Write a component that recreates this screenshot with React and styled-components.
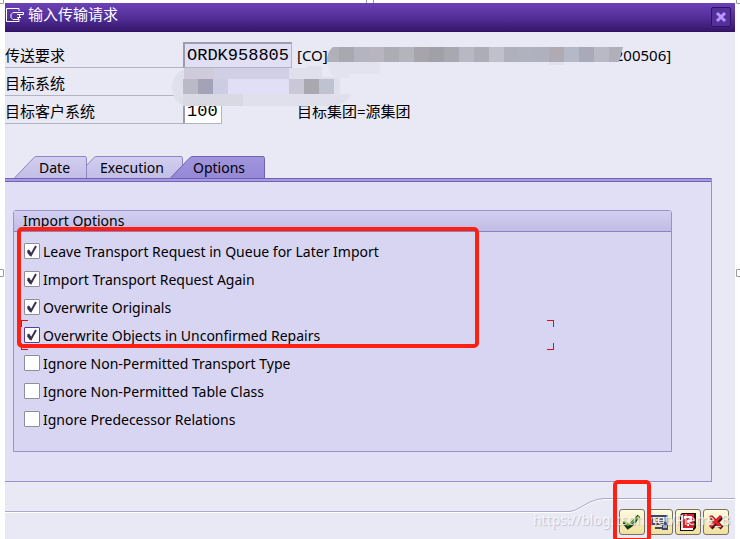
import React, { useState } from 'react';
import styled, { createGlobalStyle } from 'styled-components';

const GlobalStyle = createGlobalStyle`
  * {
    box-sizing: border-box;
  }

  body {
    margin: 0;
    background: #fff;
    color: #000;
    font-family: 'Noto Sans', 'Noto Sans CJK SC', sans-serif;
    font-size: 14px;
  }

  button, input {
    font: inherit;
    margin: 0;
  }
`;

const Page = styled.div`
  position: relative;
  display: flex;
  min-height: 100vh;
  padding: 3px 5px 0;
  overflow: hidden;
`;

const Handle = styled.span`
  position: absolute;
  width: 8px;
  height: 8px;
  border: 1px solid #999;
  border-radius: 1px;
  background: #fff;
  top: ${props => props.$top};
  left: ${props => props.$left};
  transform: translate(-50%, -50%);
`;

const Dialog = styled.main`
  position: relative;
  z-index: 1;
  flex: 1;
  display: flex;
  flex-direction: column;
  background: #e9e9f6;
`;

const TitleBar = styled.header`
  display: flex;
  align-items: center;
  height: 29px;
  padding: 0 4px 0 1px;
  background: linear-gradient(#6c42b8, #4f2b92 60%, #35176a);
  border-bottom: 1px solid #2f1263;
  color: #fff;
`;

const TitleIcon = styled.svg`
  margin-bottom: 4px;
`;

const Title = styled.h1`
  flex: 1;
  margin: 0 0 6px 2px;
  font-size: 15px;
  line-height: 20px;
  font-weight: 400;
  font-family: 'Noto Sans CJK SC', sans-serif;
`;

const CloseButton = styled.button`
  display: flex;
  width: 20px;
  height: 20px;
  padding: 0;
  align-items: center;
  justify-content: center;
  background: #54309a;
  border: 1px solid #2f1263;
  border-radius: 2px;
`;

const Form = styled.form`
  padding-top: 8px;
`;

const FormRow = styled.div`
  display: flex;
  height: 28px;
  align-items: flex-end;
`;

const Label = styled.label`
  width: 178px;
  height: 25px;
  border-bottom: 1px solid #b3b3c2;
  font-family: 'Noto Sans CJK SC', sans-serif;
  font-size: 15px;
  line-height: 24px;
`;

const Field = styled.input`
  width: ${props => props.$width};
  height: 26px;
  padding: 0 2px;
  border: 1px solid #b3b3c2;
  border-top: 2px solid #9c9cab;
  border-left: 2px solid #9c9cab;
  border-radius: 0;
  background: ${props => (props.readOnly ? '#e1dff5' : '#fff')};
  font-family: 'Liberation Mono', monospace;
  font-size: 17px;
  line-height: 22px;
  outline: none;
`;

const Note = styled.span`
  position: absolute;
  left: 292px;
  font-size: 15px;
  line-height: 25px;
  white-space: nowrap;
`;

const NoteEnd = styled.span`
  margin-left: 287px;
`;

const Mask = styled.svg`
  position: absolute;
  top: 39px;
  left: 165px;
  pointer-events: none;
`;

const Tabs = styled.div`
  display: flex;
  height: 22px;
  margin-top: 32px;
  padding-left: 9px;
`;

const Tab = styled.button`
  position: relative;
  z-index: ${props => props.$level};
  width: ${props => props.$width};
  margin-right: -14px;
  padding: 0 0 0 ${props => props.$indent};
  background: none;
  border: 0;
  text-align: left;
  font-size: 14px;
  line-height: 24px;
`;

const TabShape = styled.svg`
  position: absolute;
  inset: 0;
  width: 100%;
  height: 100%;
`;

const TabText = styled.span`
  position: relative;
`;

const TabPanel = styled.section`
  margin-right: 23px;
  height: 304px;
  background: #e1dff5;
  border-right: 1px solid #9a90cc;
  border-bottom: 1px solid #9a90cc;
`;

const TabBand = styled.div`
  height: 4px;
  background: #a69be0;
  border-top: 1px solid #7362b4;
  border-bottom: 1px solid #7362b4;
`;

const PanelBody = styled.div`
  padding: 28px 39px 29px 8px;
`;

const Group = styled.fieldset`
  position: relative;
  min-width: 0;
  height: 242px;
  margin: 0;
  padding: 0;
  border: 1px solid #9a90cc;
  border-radius: 3px 3px 0 0;
  background: #d8d5f3;
`;

const GroupTitle = styled.div`
  height: 21px;
  padding-left: 9px;
  border-bottom: 1px solid #8c82c0;
  background: linear-gradient(#d2cff0, #c0bce5);
  line-height: 20px;
`;

const CheckList = styled.div`
  padding: 5px 0 0 10px;
`;

const CheckRow = styled.label`
  position: relative;
  display: flex;
  align-items: center;
  gap: 3px;
  width: 527px;
  height: 28px;
`;

const CheckBox = styled.input`
  appearance: none;
  width: 16px;
  height: 16px;
  border: 1px solid ${props => (props.$focused ? '#5540a0' : '#8f8f9c')};
  border-radius: 1px;
  background: #fff;

  & + svg {
    visibility: hidden;
  }

  &:checked + svg {
    visibility: visible;
  }
`;

const Tick = styled.svg`
  position: absolute;
  left: 2px;
  pointer-events: none;
`;

const Corner = styled.span`
  position: absolute;
  width: 7px;
  height: 7px;
  border: 0 solid #d8101c;
  ${props => props.$v}: -1px;
  ${props => props.$h}: -3px;
  border-${props => props.$v}-width: 1px;
  border-${props => props.$h}-width: 1px;
`;

const Marker = styled.span`
  position: absolute;
  top: ${props => props.$top};
  left: ${props => props.$left};
  width: ${props => props.$width};
  height: ${props => props.$height};
  border: 4px solid #ff2014;
  border-radius: 5px;
  pointer-events: none;
`;

const Footer = styled.footer`
  position: relative;
  display: flex;
  flex: 1;
  min-height: 57px;
  align-items: flex-end;
  justify-content: flex-end;
  gap: 2px;
  padding: 0 6px 4px 0;
`;

const FooterLine = styled.svg`
  position: absolute;
  top: 14px;
  right: 0;
`;

const FooterRule = styled.span`
  position: absolute;
  left: 0;
  right: 165px;
  top: 29px;
  height: 2px;
  background: #fff;
  border-top: 1px solid #aaa8cc;
`;

const ToolButton = styled.button`
  position: relative;
  display: flex;
  align-items: center;
  justify-content: center;
  width: 26px;
  height: 26px;
  padding: 0;
  background: linear-gradient(#fffbe0, #efe09c);
  border: 1px solid #77725e;
  border-radius: 3px;
`;

const Watermark = styled.span`
  position: absolute;
  right: 5px;
  bottom: 9px;
  color: rgba(255, 255, 255, 0.75);
  text-shadow: 1px 1px 1px rgba(120, 120, 140, 0.4);
  font-size: 14px;
  line-height: 20px;
  pointer-events: none;
`;

const tabs = [
  { name: 'Date', width: 74, indent: '25px', level: 2 },
  { name: 'Execution', width: 110, indent: '26px', level: 1 },
  { name: 'Options', width: 96, indent: '23px', level: 3 }
];

const options = [
  { label: 'Leave Transport Request in Queue for Later Import', checked: true },
  { label: 'Import Transport Request Again', checked: true },
  { label: 'Overwrite Originals', checked: true },
  { label: 'Overwrite Objects in Unconfirmed Repairs', checked: true, focused: true },
  { label: 'Ignore Non-Permitted Transport Type', checked: false },
  { label: 'Ignore Non-Permitted Table Class', checked: false },
  { label: 'Ignore Predecessor Relations', checked: false }
];

const noteBlocks = [
  '#b0b0b8', '#a8a8b0', '#b4b4c0', '#b8b4c0', '#acacb4', '#b4b4bc', '#a8a4ac',
  '#a0a0a8', '#a8a8b0', '#b8b8c4', '#adadb8', '#c0bfcc', '#b0b0bc', '#b1b2c0',
  '#b0b1bf', '#b0aab2', '#b5b8c7', '#a9a9ba', '#b9b8c5', '#b0b0bb'
];

function Redaction() {
  return (
    <Mask width="460" height="66" aria-hidden="true">
      <path d="M20 26H137V24H152V35H170V52H181Q178 64 155 64H22Q2 64 2 45Q3 29 20 26Z" fill="#e0e0ec" />
      <path d="M14 26h30v11H14z" fill="#cfcbdd" />
      <path d="M44 26h75v11H44z" fill="#d0cfe5" />
      <path d="M13 37h15v15H13z" fill="#bbb8c8" />
      <path d="M28 37h15v15H28z" fill="#a3a2b6" />
      <path d="M43 37h15v15H43z" fill="#cccce2" />
      <path d="M58 37h61v15H58z" fill="#e0dff5" />
      <path d="M119 37h15v15h-15z" fill="#cac8d7" />
      <path d="M134 37h15v15h-15z" fill="#a9a7b0" />
      <path d="M149 37h15v15h-15z" fill="#bfc3d1" />
      <path d="M13 52h60v12H13z" fill="#d9d9e3" />
      <path d="M157 20h53v12h-30v4h-12q-10-4-11-16z" fill="#e3e3ef" />
      <path d="M379 20h15v3h-15z" fill="#e1e1ee" />
      <clipPath id="note-clip">
        <path d="M163 5H453L449 20H157Q157 9 163 5Z" />
      </clipPath>
      <g clipPath="url(#note-clip)">
        {noteBlocks.map((color, index) => (
          <rect key={index} x={154 + index * 15} y="5" width="15" height="15" fill={color} />
        ))}
      </g>
    </Mask>
  );
}

function App() {
  const [active, setActive] = useState('Options');

  return (
    <Page>
      <GlobalStyle />
      <Dialog>
        <TitleBar>
          <TitleIcon width="20" height="16" viewBox="0 0 20 16" fill="none" stroke="#fff">
            <path d="M13 4V1.500H.5v13H13V12M7 5.500h10.500v2H12M7 5.500l-2 2v3l2 2h5.500v-2H15M11 7.500h2.500v3H11" />
          </TitleIcon>
          <Title>输入传输请求</Title>
          <CloseButton type="button" aria-label="Close">
            <svg width="12" height="12" viewBox="0 0 12 12" stroke="#b896ff" strokeWidth="3">
              <path d="M2 2l8 8M10 2l-8 8" />
            </svg>
          </CloseButton>
        </TitleBar>

        <Form>
          <FormRow>
            <Label htmlFor="request">传送要求</Label>
            <Field id="request" $width="109px" defaultValue="ORDK958805" readOnly />
            <Note>[CO]<NoteEnd>200506]</NoteEnd></Note>
          </FormRow>
          <FormRow>
            <Label htmlFor="system">目标系统</Label>
            <Field id="system" $width="109px" defaultValue="" readOnly />
          </FormRow>
          <FormRow>
            <Label htmlFor="client">目标客户系统</Label>
            <Field id="client" $width="39px" defaultValue="100" />
            <Note>目标集团=源集团</Note>
          </FormRow>
        </Form>
        <Redaction />

        <Tabs role="tablist">
          {tabs.map(tab => {
            const selected = tab.name === active;
            return (
              <Tab
                key={tab.name}
                type="button"
                role="tab"
                aria-selected={selected}
                $width={`${tab.width}px`}
                $indent={tab.indent}
                $level={tab.level}
                onClick={() => setActive(tab.name)}
              >
                <TabShape viewBox={`0 0 ${tab.width} 22`}>
                  <defs>
                    <linearGradient id={`fill-${tab.name}`} x2="0" y2="1">
                      <stop stopColor={selected ? '#a195dd' : '#d3cff0'} />
                      <stop offset="1" stopColor={selected ? '#9588d6' : '#c2bde6'} />
                    </linearGradient>
                  </defs>
                  <path
                    d={`M0.5 22L20 1.5Q21 .5 23 .5H${tab.width - 3}q1.5 0 1.5 2V22`}
                    fill={`url(#fill-${tab.name})`}
                    stroke={selected ? '#7362b4' : '#8f84c4'}
                  />
                </TabShape>
                <TabText>{tab.name}</TabText>
              </Tab>
            );
          })}
        </Tabs>

        <TabPanel role="tabpanel">
          <TabBand />
          <PanelBody>
            <Group aria-label="Import Options">
              <GroupTitle>Import Options</GroupTitle>
              <CheckList>
                {options.map(option => (
                  <CheckRow key={option.label}>
                    <CheckBox type="checkbox" defaultChecked={option.checked} $focused={option.focused} />
                    <Tick width="12" height="12" viewBox="0 0 12 12" fill="none" stroke="#3b3050" strokeWidth="2">
                      <path d="M2 5l3 5 5-9" />
                      <path d="M2 6l3 4" strokeWidth="3" />
                    </Tick>
                    <span>{option.label}</span>
                    {option.focused && (
                      <>
                        <Corner $v="top" $h="left" />
                        <Corner $v="bottom" $h="left" />
                        <Corner $v="top" $h="right" />
                        <Corner $v="bottom" $h="right" />
                      </>
                    )}
                  </CheckRow>
                ))}
              </CheckList>
              <Marker $top="16px" $left="3px" $width="462px" $height="121px" />
            </Group>
          </PanelBody>
        </TabPanel>

        <Footer>
          <FooterRule />
          <FooterLine width="165" height="20" fill="none">
            <path d="M0 16.500Q5 16 11 12L20 7Q28 3.500 34 3.500H165" stroke="#fff" />
            <path d="M0 15.500Q5 15 11 11L20 6Q28 2.500 34 2.500H165" stroke="#aaa8cc" />
          </FooterLine>
          <ToolButton type="button" aria-label="Continue">
            <svg width="18" height="18" viewBox="0 0 18 18" fill="none">
              <path d="M1 9l4 5 3-2 8-9" stroke="#18310f" strokeWidth="4" />
              <path d="M1 8l4 4 2-1 9-8" stroke="#64ad38" strokeWidth="2" />
            </svg>
          </ToolButton>
          <ToolButton type="button" aria-label="Schedule">
            <svg width="20" height="18" viewBox="0 0 20 18">
              <path d="M1 2h17v10H1z" fill="#3d456a" />
              <path d="M3 4h11v6H3z" fill="#f0e6c0" />
              <path d="M5 5h3v1H6v2h2v1H5zM9 5h4v4H9z" fill="#4d5578" />
              <path d="M14 4h3v5h-3z" fill="#a3abca" />
              <path d="M5 14h7v2H5z" fill="#3d456a" />
              <path d="M12 11h6v6h-6z" fill="#3d456a" />
              <path d="M13 12h4v3h-4z" fill="#a3abca" />
            </svg>
          </ToolButton>
          <ToolButton type="button" aria-label="Help">
            <svg width="20" height="20" viewBox="0 0 20 20">
              <path d="M4 1h14v15l-3 3H2V3z" fill="#200808" />
              <path d="M3 4l2-2v14H3z" fill="#f4d8d8" />
              <path d="M5 2h11v14H5z" fill="#d51f2c" />
              <path d="M3 16h12v2H3z" fill="#fff" />
              <path d="M7 7V5h6v4h-3v2M10 12v2" fill="none" stroke="#fff" strokeWidth="2" />
            </svg>
          </ToolButton>
          <ToolButton type="button" aria-label="Cancel">
            <svg width="18" height="18" viewBox="0 0 18 18" fill="none">
              <path d="M4 4l11 11M15 4L4 15" stroke="#38080a" strokeWidth="4" />
              <path d="M3 3l11 11M14 3L3 14" stroke="#e02128" strokeWidth="3" />
            </svg>
          </ToolButton>
          <Watermark>https://blog.csdn.net/Pierre_B</Watermark>
          <Marker $top="-2px" $left="608px" $width="38px" $height="62px" />
        </Footer>
      </Dialog>
      <Handle $top="0" $left="0" />
      <Handle $top="0" $left="50%" />
      <Handle $top="0" $left="100%" />
      <Handle $top="273px" $left="0" />
      <Handle $top="273px" $left="100%" />
    </Page>
  );
}

export default App;
